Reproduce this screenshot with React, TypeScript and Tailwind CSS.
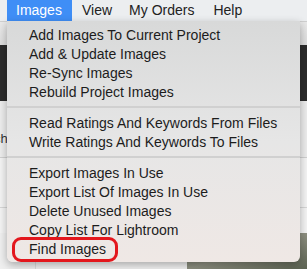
const font = { fontFamily: '"Liberation Sans", Arial, sans-serif' };

const groups = [
  ["Add Images To Current Project", "Add & Update Images", "Re-Sync Images", "Rebuild Project Images"],
  ["Read Ratings And Keywords From Files", "Write Ratings And Keywords To Files"],
  ["Export Images In Use", "Export List Of Images In Use", "Delete Unused Images", "Copy List For Lightroom", "Find Images"],
];

const MenuItem = ({ label }: { label: string }) => (
  <div className="relative flex h-[19px] items-center pl-[22px] text-[14px] leading-none text-[#1c1c1c]">
    {label}
    {label === "Find Images" && (
      <span className="absolute left-[5px] top-[-2px] h-[25px] w-[106px] rounded-[9px] border-[3px] border-[#e3171d]"></span>
    )}
  </div>
);

export default function App() {
  return (
    <div className="relative h-[269px] w-[307px] overflow-hidden bg-[#efefef]" style={font}>
      {/* menu bar */}
      <div className="flex h-[21px] items-stretch bg-[#eceef0] text-[14px] text-[#222]">
        <div className="ml-[7px] flex w-[65px] items-center bg-[#3f8ef6] pl-[9px] text-white">Images</div>
        <div className="flex items-center pl-[10px]">View</div>
        <div className="flex items-center pl-[17px]">My Orders</div>
        <div className="flex items-center pl-[19px]">Help</div>
      </div>

      {/* window behind the menu */}
      <div className="flex flex-col">
        <div className="h-[24px] border-t border-[#cfcfcf] bg-linear-to-b from-[#e9e9e9] to-[#dcdcdc]"></div>
        <div className="h-[56px] bg-[#2b2b2b]"></div>
        <div className="h-[57px] border-b border-[#cfcfcf] bg-[#ececec] pl-[0px] pt-[28px] text-[13px] text-[#333]">
          <span className="-ml-[6px]">ch</span>
        </div>
        <div className="h-[50px] border-b border-[#d6d6d6] bg-[#f3f3f3]"></div>
        <div className="h-[25px] bg-[#f3f3f3]"></div>
        <div className="flex h-[36px]">
          <div className="flex-1 border-l border-[#dcdcdc] bg-[#f1f1f1] ml-[35px]"></div>
          <div className="w-[120px] bg-linear-to-br from-[#6f7665] via-[#8d8f80] to-[#5d6453]"></div>
        </div>
      </div>

      {/* dropdown */}
      <div className="absolute left-[7px] top-[21px] w-[293px] rounded-b-[6px] bg-linear-to-b from-[#d8d9d9] via-[#e6e6e6] to-[#efe8e5] pb-[4px] pt-[4px] shadow-[0_3px_8px_rgba(0,0,0,0.3)]">
        {groups.map((g, i) => (
          <div key={i}>
            {i > 0 && (
              <div className="flex h-[12px] items-center">
                <div className="h-[2px] w-full bg-[#d0d0d0]"></div>
              </div>
            )}
            {g.map((label) => (
              <MenuItem key={label} label={label} />
            ))}
          </div>
        ))}
      </div>
    </div>
  );
}
